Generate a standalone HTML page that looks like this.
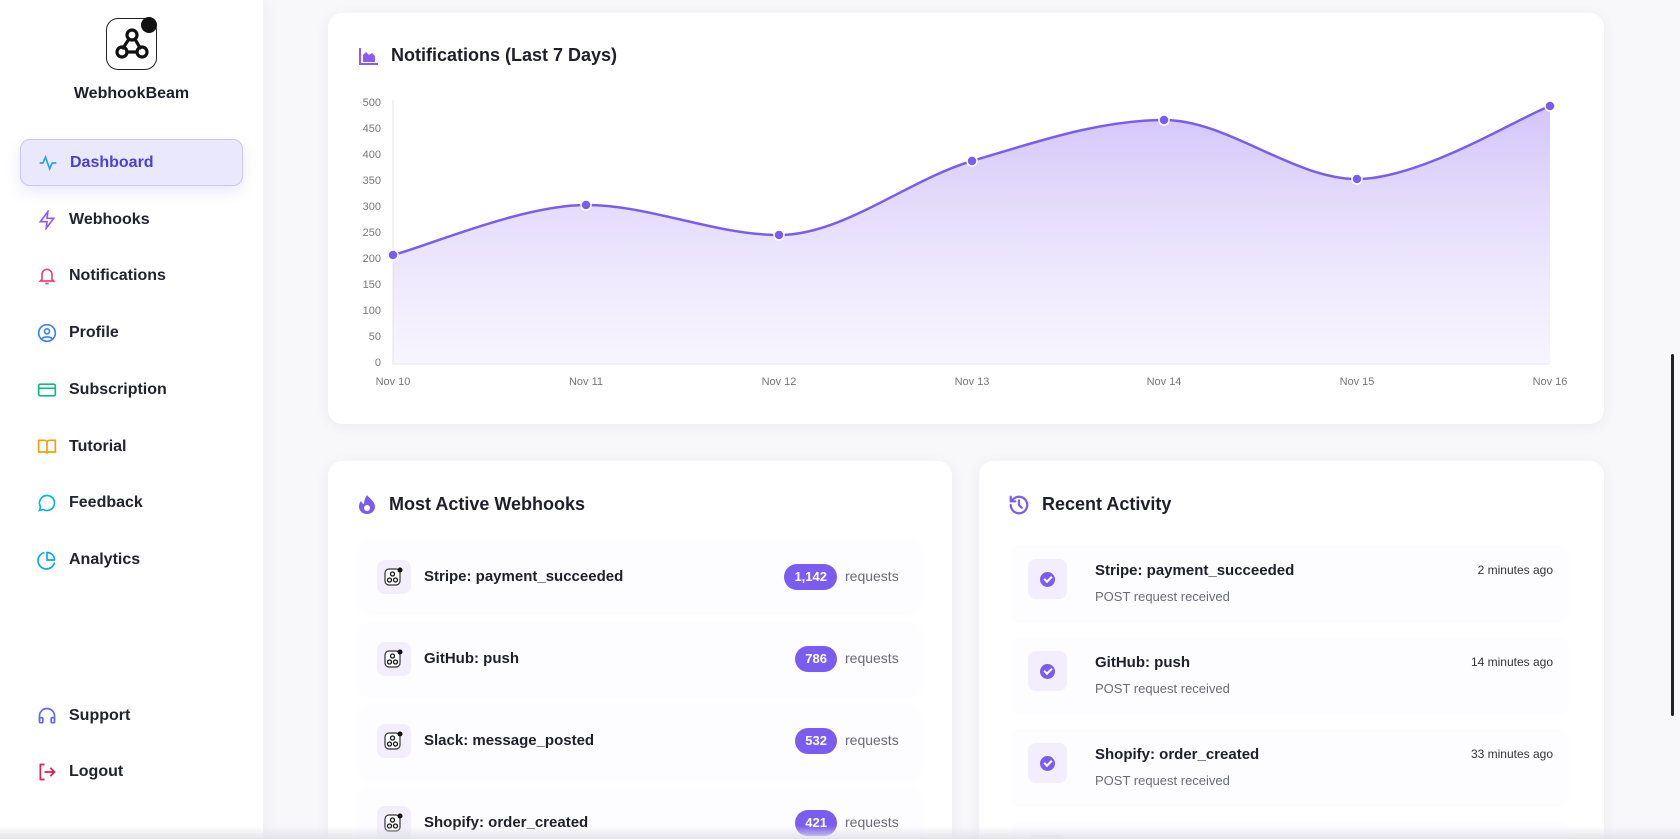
<!DOCTYPE html>
<html><head><meta charset="utf-8"><style>
*{box-sizing:border-box;margin:0;padding:0}
html,body{width:1680px;height:839px;overflow:hidden}
body{background:#f8f8fb;font-family:"Liberation Sans",sans-serif;color:#1f1f2a;position:relative}
#wrap{position:absolute;left:0;top:0;width:1680px;height:839px;overflow:hidden}
.side{position:absolute;left:0;top:0;width:263px;height:839px;background:#fff;box-shadow:4px 0 18px rgba(0,0,0,.04)}
.logo{position:absolute;left:106px;top:18px;width:51px;height:52px;border:1.5px solid #222;border-radius:12px;background:#fff}
.dot{position:absolute;left:141px;top:17px;width:16px;height:16px;border-radius:50%;background:#111}
.brand{position:absolute;left:0;width:263px;top:85px;text-align:center;font-weight:bold;font-size:16px}
.nav{position:absolute;left:20px;width:223px;height:47px;display:flex;align-items:center;font-size:16px;font-weight:bold;color:#23232e}
.nav svg{position:absolute;left:17px}
.nav span{position:absolute;left:49px}
.act{background:#e9e8fc;border:1px solid #c9c6f3;border-radius:10px;box-shadow:0 6px 14px rgba(110,100,230,.15);color:#4b3fd8}
.card{position:absolute;background:#fff;border-radius:14px;box-shadow:0 2px 14px rgba(0,0,0,.06);overflow:hidden}
.ttl{position:absolute;font-size:18px;font-weight:bold}
.row{position:absolute;left:32px;width:559px;height:70px;background:#fdfcff;border-radius:10px;box-shadow:0 1px 8px rgba(120,100,200,.04)}
.ib{position:absolute;left:17px;top:18px;width:34px;height:34px;border-radius:8px;background:#f3eefc}
.ib svg{position:absolute;left:7px;top:7px}
.rn{position:absolute;left:64px;top:26px;font-size:15px;font-weight:bold}
.bd{position:absolute;right:82px;top:22px;height:26px;border-radius:13px;background:#7b5cf0;color:#fff;font-size:13px;font-weight:bold;line-height:26px;padding:0 10px;text-align:center}
.rq{position:absolute;left:485px;top:26px;font-size:14px;color:#6b6b78}
.ar{position:absolute;left:32px;width:558px;height:78px;background:#fdfcff;border-radius:10px}
.ai{position:absolute;left:17px;top:14px;width:39px;height:40px;border-radius:8px;background:#f3eefc}
.ai:after{content:"";position:absolute;left:12px;top:13px;width:15px;height:15px;border-radius:50%;background:#7b5cf0}
.ai:before{content:"";position:absolute;left:16px;top:17px;width:6px;height:3px;border-left:2px solid #fff;border-bottom:2px solid #fff;transform:rotate(-45deg);z-index:2}
.at{position:absolute;left:84px;top:17px;font-size:15px;font-weight:bold}
.as{position:absolute;left:84px;top:44px;font-size:13px;color:#6b6b78}
.tm{position:absolute;right:16px;top:18px;font-size:12px;color:#333}
.yl{position:absolute;width:40px;text-align:right;font-size:11px;color:#777}
.xl{position:absolute;font-size:11px;color:#777;width:60px;text-align:center}
</style></head><body><div id="wrap">
<div class="side">
 <div class="logo"><svg width="48" height="48" viewBox="0 0 48 48" style="position:absolute;left:1px;top:1px"><g fill="none" stroke="#111" stroke-width="3.2" stroke-linecap="round"><circle cx="24" cy="15" r="5"/><circle cx="14" cy="32" r="5"/><circle cx="34" cy="32" r="5"/><path d="M21 19l-6 9M27 19l5 9M19 32h10"/></g></svg></div>
 <div class="dot"></div>
 <div class="brand">WebhookBeam</div>
 <div class="nav act" style="top:139px"><svg width="20" height="20" viewBox="0 0 24 24" fill="none" stroke="#22a6e8" stroke-width="2"><path d="M2 12h4l3-7 5 14 3-7h5"/></svg><span>Dashboard</span></div>
 <div class="nav" style="top:196px"><svg width="20" height="20" viewBox="0 0 24 24" fill="none" stroke="#8b5cf6" stroke-width="2"><path d="M13 2 4 14h8l-1 8 9-12h-8z"/></svg><span>Webhooks</span></div>
 <div class="nav" style="top:252px"><svg width="20" height="20" viewBox="0 0 24 24" fill="none" stroke="#e8457a" stroke-width="2"><path d="M6 16V10a6 6 0 0 1 12 0v6l2 2H4zM10 21h4"/></svg><span>Notifications</span></div>
 <div class="nav" style="top:309px"><svg width="20" height="20" viewBox="0 0 24 24" fill="none" stroke="#3b82f6" stroke-width="2"><circle cx="12" cy="12" r="10"/><circle cx="12" cy="10" r="3"/><path d="M6 19c2-3 10-3 12 0"/></svg><span>Profile</span></div>
 <div class="nav" style="top:366px"><svg width="20" height="20" viewBox="0 0 24 24" fill="none" stroke="#10b981" stroke-width="2"><rect x="2" y="5" width="20" height="14" rx="2"/><path d="M2 10h20"/></svg><span>Subscription</span></div>
 <div class="nav" style="top:423px"><svg width="20" height="20" viewBox="0 0 24 24" fill="none" stroke="#f59e0b" stroke-width="2"><path d="M2 4h7a3 3 0 0 1 3 3v13a2 2 0 0 0-2-2H2zM22 4h-7a3 3 0 0 0-3 3v13a2 2 0 0 1 2-2h8z"/></svg><span>Tutorial</span></div>
 <div class="nav" style="top:479px"><svg width="20" height="20" viewBox="0 0 24 24" fill="none" stroke="#06b6d4" stroke-width="2"><path d="M12 3a9 9 0 1 1-4.5 16.8L3 21l1.2-4.5A9 9 0 0 1 12 3z"/></svg><span>Feedback</span></div>
 <div class="nav" style="top:536px"><svg width="20" height="20" viewBox="0 0 24 24" fill="none" stroke="#0ea5e9" stroke-width="2"><path d="M21 15A10 10 0 1 1 9 3M21 12A9 9 0 0 0 12 3v9z"/></svg><span>Analytics</span></div>
 <div class="nav" style="top:692px"><svg width="20" height="20" viewBox="0 0 24 24" fill="none" stroke="#6366f1" stroke-width="2"><path d="M3 18v-6a9 9 0 0 1 18 0v6"/><rect x="3" y="14" width="4" height="6" rx="1"/><rect x="17" y="14" width="4" height="6" rx="1"/></svg><span>Support</span></div>
 <div class="nav" style="top:748px"><svg width="20" height="20" viewBox="0 0 24 24" fill="none" stroke="#e11d48" stroke-width="2"><path d="M9 21H4V3h5M16 17l5-5-5-5M21 12H9"/></svg><span>Logout</span></div>
</div>

<div class="card" style="left:328px;top:13px;width:1276px;height:411px"></div>
<svg style="position:absolute;left:359px;top:47px" width="20" height="18" viewBox="0 0 20 18"><path d="M1 1v16h18" fill="none" stroke="#8b5cf6" stroke-width="2"/><path d="M4 15V8l3-3 3 3 3-2 3 3v6z" fill="#8b5cf6"/></svg>
<div class="ttl" style="left:391px;top:45px">Notifications (Last 7 Days)</div>
<div class="yl" style="left:341px;top:97px">500</div><div class="yl" style="left:341px;top:123px">450</div><div class="yl" style="left:341px;top:149px">400</div><div class="yl" style="left:341px;top:175px">350</div><div class="yl" style="left:341px;top:201px">300</div><div class="yl" style="left:341px;top:227px">250</div><div class="yl" style="left:341px;top:253px">200</div><div class="yl" style="left:341px;top:279px">150</div><div class="yl" style="left:341px;top:305px">100</div><div class="yl" style="left:341px;top:331px">50</div><div class="yl" style="left:341px;top:357px">0</div>
<div class="xl" style="left:363px;top:376px">Nov 10</div><div class="xl" style="left:556px;top:376px">Nov 11</div><div class="xl" style="left:749px;top:376px">Nov 12</div><div class="xl" style="left:942px;top:376px">Nov 13</div><div class="xl" style="left:1134px;top:376px">Nov 14</div><div class="xl" style="left:1327px;top:376px">Nov 15</div><div class="xl" style="left:1520px;top:376px">Nov 16</div>
<svg style="position:absolute;left:0;top:0" width="1680" height="420">
<defs><linearGradient id="g" x1="0" y1="0" x2="0" y2="1"><stop offset="0" stop-color="#c4b1f7" stop-opacity=".75"/><stop offset="1" stop-color="#ece6fc" stop-opacity=".4"/></linearGradient></defs>
<path d="M393 100V364H1550" fill="none" stroke="#e4e4ea"/>
<path d="M393 255C425 247 522 205 586 205C650 205 715 235 779 235C843 235 908 180 972 161C1036 142 1100 120 1164 120C1228 120 1293 179 1357 179C1421 179 1518 118 1550 106V364H393Z" fill="url(#g)"/>
<path d="M393 255C425 247 522 205 586 205C650 205 715 235 779 235C843 235 908 180 972 161C1036 142 1100 120 1164 120C1228 120 1293 179 1357 179C1421 179 1518 118 1550 106" fill="none" stroke="#7b5cf0" stroke-width="2.5"/>
<g fill="#7b5cf0" stroke="#fff" stroke-width="1.5"><circle cx="393" cy="255" r="5"/><circle cx="586" cy="205" r="5"/><circle cx="779" cy="235" r="5"/><circle cx="972" cy="161" r="5"/><circle cx="1164" cy="120" r="5"/><circle cx="1357" cy="179" r="5"/><circle cx="1550" cy="106" r="5"/></g>
</svg>

<div class="card" style="left:328px;top:461px;width:624px;height:378px;border-bottom-left-radius:0;border-bottom-right-radius:0">
 <svg style="position:absolute;left:30px;top:33px" width="18" height="20" viewBox="0 0 18 20"><path d="M9 1c2 3 8 6 8 12a8 7 0 0 1-16 0c0-3 1-5 2-6 1 2 2 3 3 3 0-3 1-6 3-9z" fill="#7b5cf0"/><circle cx="9" cy="14" r="3" fill="#fff"/></svg>
 <div class="ttl" style="left:61px;top:33px">Most Active Webhooks</div>
 <div class="row" style="top:81px"><div class="ib"><svg width="20" height="20" viewBox="0 0 20 20"><rect x="1" y="2" width="15" height="16" rx="4" fill="#fff" stroke="#333" stroke-width="1.2"/><g fill="none" stroke="#111" stroke-width="1.3"><circle cx="8.5" cy="7" r="2"/><circle cx="5.5" cy="13" r="2"/><circle cx="11.5" cy="13" r="2"/></g><circle cx="16" cy="3" r="2.5" fill="#111"/></svg></div><div class="rn">Stripe: payment_succeeded</div><div class="bd">1,142</div><div class="rq">requests</div></div>
 <div class="row" style="top:163px"><div class="ib"><svg width="20" height="20" viewBox="0 0 20 20"><rect x="1" y="2" width="15" height="16" rx="4" fill="#fff" stroke="#333" stroke-width="1.2"/><g fill="none" stroke="#111" stroke-width="1.3"><circle cx="8.5" cy="7" r="2"/><circle cx="5.5" cy="13" r="2"/><circle cx="11.5" cy="13" r="2"/></g><circle cx="16" cy="3" r="2.5" fill="#111"/></svg></div><div class="rn">GitHub: push</div><div class="bd">786</div><div class="rq">requests</div></div>
 <div class="row" style="top:245px"><div class="ib"><svg width="20" height="20" viewBox="0 0 20 20"><rect x="1" y="2" width="15" height="16" rx="4" fill="#fff" stroke="#333" stroke-width="1.2"/><g fill="none" stroke="#111" stroke-width="1.3"><circle cx="8.5" cy="7" r="2"/><circle cx="5.5" cy="13" r="2"/><circle cx="11.5" cy="13" r="2"/></g><circle cx="16" cy="3" r="2.5" fill="#111"/></svg></div><div class="rn">Slack: message_posted</div><div class="bd">532</div><div class="rq">requests</div></div>
 <div class="row" style="top:327px"><div class="ib"><svg width="20" height="20" viewBox="0 0 20 20"><rect x="1" y="2" width="15" height="16" rx="4" fill="#fff" stroke="#333" stroke-width="1.2"/><g fill="none" stroke="#111" stroke-width="1.3"><circle cx="8.5" cy="7" r="2"/><circle cx="5.5" cy="13" r="2"/><circle cx="11.5" cy="13" r="2"/></g><circle cx="16" cy="3" r="2.5" fill="#111"/></svg></div><div class="rn">Shopify: order_created</div><div class="bd">421</div><div class="rq">requests</div></div>
</div>

<div class="card" style="left:979px;top:461px;width:625px;height:378px;border-bottom-left-radius:0;border-bottom-right-radius:0">
 <svg style="position:absolute;left:29px;top:33px" width="22" height="22" viewBox="0 0 24 24" fill="none" stroke="#7b5cf0" stroke-width="2.4" stroke-linecap="round"><path d="M3 12a9 9 0 1 0 3-6.7L3 8M3 3v5h5M12 7v5l3 3"/></svg>
 <div class="ttl" style="left:63px;top:33px">Recent Activity</div>
 <div class="ar" style="top:84px"><div class="ai"></div><div class="at">Stripe: payment_succeeded</div><div class="as">POST request received</div><div class="tm">2 minutes ago</div></div>
 <div class="ar" style="top:176px"><div class="ai"></div><div class="at">GitHub: push</div><div class="as">POST request received</div><div class="tm">14 minutes ago</div></div>
 <div class="ar" style="top:268px"><div class="ai"></div><div class="at">Shopify: order_created</div><div class="as">POST request received</div><div class="tm">33 minutes ago</div></div>
 <div class="ar" style="top:360px"><div class="ai"></div></div>
</div>
<div style="position:absolute;left:1671px;top:354px;width:3px;height:362px;background:#222;border-radius:2px"></div>
<div style="position:absolute;left:0;top:826px;width:1680px;height:13px;background:linear-gradient(rgba(240,240,244,0),rgba(225,225,232,.9))"></div>
</div></body></html>
